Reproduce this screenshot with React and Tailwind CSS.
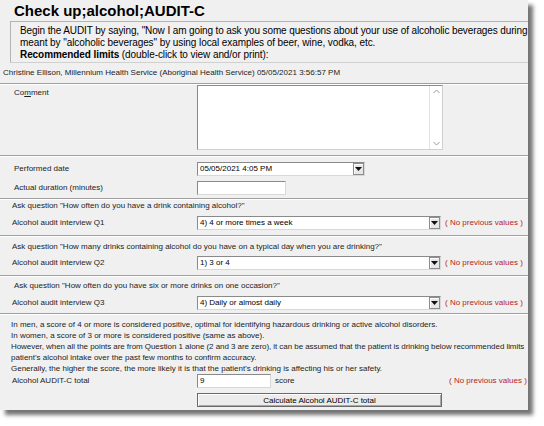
import React from 'react';

const FONT = "font-['Liberation_Sans',Arial,sans-serif]";

function Sep() {
  return <div className="h-[2px] border-t border-b border-t-[#a0a0a0] border-b-white" />;
}

function Arrow() {
  return (
    <svg width="7" height="4" viewBox="0 0 7 4">
      <path d="M0 0h7L3.5 4z" fill="#111" />
    </svg>
  );
}

function Select({ value, className }) {
  return (
    <div className={`flex h-[14px] items-stretch border border-t-[#8a8a8a] border-l-[#8a8a8a] border-r-[#d8d8d8] border-b-[#d8d8d8] bg-white ${className}`}>
      <div className="flex-1 pl-[2px] leading-[12px] text-black whitespace-nowrap overflow-hidden">{value}</div>
      <div className="flex w-[11px] items-center justify-center border border-[#8c8c8c] bg-[#e6e6e6] shadow-[inset_1px_1px_0_#fff]">
        <Arrow />
      </div>
    </div>
  );
}

function Label({ children, className = '' }) {
  return <div className={`w-[197px] shrink-0 whitespace-nowrap ${className}`}>{children}</div>;
}

function NoPrev() {
  return <div className="ml-[4px] whitespace-nowrap text-[#b4232a]">( No previous values )</div>;
}

function Question({ ask, label, value, askPad, pt, mt, h }) {
  return (
    <div className={`${h} ${pt}`}>
      <div className={`h-[10px] leading-[10px] whitespace-nowrap ${askPad}`}>{ask}</div>
      <div className={`${mt} flex items-center`}>
        <Label className="pl-[12px]">{label}</Label>
        <Select value={value} className="w-[244px]" />
        <NoPrev />
      </div>
    </div>
  );
}

export default function App() {
  return (
    <div className={`w-[544px] h-[426px] bg-white overflow-hidden ${FONT}`}>
      <div className="w-[528px] h-[410px] overflow-hidden bg-[#f0f0f0] shadow-[5px_5px_4px_rgba(0,0,0,0.55)] text-[8px] leading-[10px] text-[#1c1c1c]">
        {/* title */}
        <div className="h-[21px] pl-[14px] pt-[2px] text-[15px] font-bold leading-[18px] text-black">
          Check up;alcohol;AUDIT-C
        </div>

        {/* instructions */}
        <div className="ml-[10px] h-[42px] overflow-hidden border border-r-0 border-[#b4b4b4] border-b-[#d0d0d0] pl-[9px] pt-[3px] text-[10px] leading-[12px] tracking-[-0.08px] text-black whitespace-nowrap">
          <div className="tracking-[-0.12px]">Begin the AUDIT by saying, "Now I am going to ask you some questions about your use of alcoholic beverages during</div>
          <div>meant by "alcoholic beverages" by using local examples of beer, wine, vodka, etc.</div>
          <div>
            <span className="font-bold">Recommended limits</span> (double-click to view and/or print):
          </div>
        </div>

        <div className="flex h-[20px] items-center pl-[3px] whitespace-nowrap">
          Christine Ellison, Millennium Health Service (Aboriginal Health Service) 05/05/2021 3:56:57 PM
        </div>
        <Sep />

        {/* comment */}
        <div className="flex h-[70px]">
          <Label className="pl-[14px] pt-[3px]">
            Co<span className="underline">m</span>ment
          </Label>
          <div className="flex h-[65px] w-[246px] justify-end border border-t-[#8a8a8a] border-l-[#8a8a8a] border-r-[#d0d0d0] border-b-[#d0d0d0] bg-white">
            <div className="flex w-[13px] flex-col items-center justify-between border-l border-[#e2e2e2] bg-white py-[3px]">
              <svg width="7" height="5" viewBox="0 0 7 5">
                <path d="M0.5 4L3.5 1L6.5 4" stroke="#9a9a9a" fill="none" />
              </svg>
              <svg width="7" height="5" viewBox="0 0 7 5">
                <path d="M0.5 1L3.5 4L6.5 1" stroke="#9a9a9a" fill="none" />
              </svg>
            </div>
          </div>
        </div>
        <Sep />

        {/* dates */}
        <div className="h-[41px] pt-[5px]">
          <div className="flex items-center">
            <Label className="pl-[14px]">Performed date</Label>
            <Select value="05/05/2021 4:05 PM" className="w-[168px]" />
          </div>
          <div className="mt-[5px] flex items-center">
            <Label className="pl-[14px]">Actual duration (minutes)</Label>
            <div className="h-[14px] w-[89px] border border-t-[#8a8a8a] border-l-[#8a8a8a] border-r-[#d8d8d8] border-b-[#d8d8d8] bg-white" />
          </div>
        </div>
        <Sep />

        <Question
          h="h-[35px]"
          pt="pt-[1px]"
          mt="mt-[5px]"
          askPad="pl-[12px]"
          ask={'Ask question "How often do you have a drink containing alcohol?"'}
          label="Alcohol audit interview Q1"
          value="4) 4 or more times a week"
        />
        <Sep />
        <Question
          h="h-[38px]"
          pt="pt-[5px]"
          mt="mt-[4px]"
          askPad="pl-[12px]"
          ask={'Ask question "How many drinks containing alcohol do you have on a typical day when you are drinking?"'}
          label="Alcohol audit interview Q2"
          value="1) 3 or 4"
        />
        <Sep />
        <Question
          h="h-[36px]"
          pt="pt-[4px]"
          mt="mt-[5px]"
          askPad="pl-[14px]"
          ask={'Ask question "How often do you have six or more drinks on one occasion?"'}
          label="Alcohol audit interview Q3"
          value="4) Daily or almost daily"
        />
        <Sep />

        {/* scoring */}
        <div className="pt-[4px]">
          <div className="pl-[11px] leading-[11px] whitespace-nowrap">
            <div>In men, a score of 4 or more is considered positive, optimal for identifying hazardous drinking or active alcohol disorders.</div>
            <div>In women, a score of 3 or more is considered positive (same as above).</div>
            <div className="tracking-[-0.06px]">However, when all the points are from Question 1 alone (2 and 3 are zero), it can be assumed that the patient is drinking below recommended limits</div>
            <div>patient's alcohol intake over the past few months to confirm accuracy.</div>
            <div>Generally, the higher the score, the more likely it is that the patient's drinking is affecting his or her safety.</div>
          </div>
          <div className="flex h-[14px] items-center">
            <Label className="pl-[12px]">Alcohol AUDIT-C total</Label>
            <div className="h-[14px] w-[74px] border border-t-[#8a8a8a] border-l-[#8a8a8a] border-r-[#d8d8d8] border-b-[#d8d8d8] bg-white pl-[2px] leading-[12px] text-black">
              9
            </div>
            <div className="ml-[4px] w-[170px]">score</div>
            <NoPrev />
          </div>
          <div className="mt-[5px] flex">
            <div className="w-[197px] shrink-0" />
            <button className="h-[14px] w-[245px] border border-[#6a6a6a] bg-[#ececec] leading-[11px] text-black shadow-[inset_1px_1px_0_#fff,inset_-1px_-1px_0_#a8a8a8]">
              Calculate Alcohol AUDIT-C total
            </button>
          </div>
        </div>
      </div>
    </div>
  );
}
